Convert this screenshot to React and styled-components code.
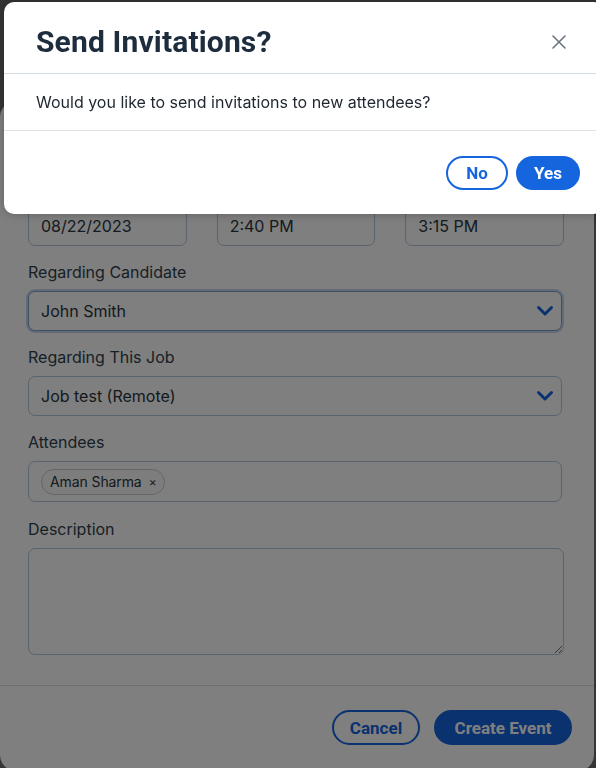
import styled, { createGlobalStyle } from "styled-components";

const GlobalStyle = createGlobalStyle`
  html, body {
    margin: 0;
    padding: 0;
    height: 100%;
    overflow: hidden;
    background: #6a6a6a;
  }
  * {
    box-sizing: border-box;
  }
`;

const BLUE = "#1565df";
const BODY_FONT = `Inter, "Noto Sans", sans-serif`;
const HEAD_FONT = `Roboto, "Liberation Sans", sans-serif`;

const Page = styled.div`
  width: 100vw;
  height: 100vh;
  font-family: ${BODY_FONT};
`;

/* ---------- create event modal (under the backdrop) ---------- */

const EventModal = styled.div`
  position: fixed;
  top: 101px;
  left: 0;
  width: 594px;
  background: #ffffff;
  border-radius: 16px;
`;

const EventBody = styled.div`
  padding: 105px 30px 30px 28px;
  display: flex;
  flex-direction: column;
  gap: 15px;
`;

const Row = styled.div`
  display: grid;
  grid-template-columns: repeat(3, 1fr);
  gap: 30px;
`;

const Field = styled.div`
  display: flex;
  flex-direction: column;
  gap: 8px;
  margin-top: ${({ $push }) => $push || 0}px;
`;

const Label = styled.label`
  font-size: 16px;
  line-height: 22px;
  color: #2f3e4e;
`;

const Input = styled.div`
  height: 40px;
  padding: 0 ${({ $inset }) => ($inset ? "7px" : "12px")} 0 12px;
  display: flex;
  align-items: center;
  justify-content: space-between;
  border: 1px solid ${({ $focused }) => ($focused ? "#7f9fc8" : "#b4c6dc")};
  box-shadow: ${({ $focused }) => ($focused ? "0 0 0 2px #c4d6ee" : "none")};
  border-radius: 7px;
  font-size: 16px;
  color: #2a3440;
  margin-right: ${({ $inset }) => ($inset ? "2px" : "0")};
  background: #fff;
`;

const TagBox = styled.div`
  height: 41px;
  margin-right: 2px;
  padding: 0 12px;
  display: flex;
  align-items: center;
  gap: 6px;
  border: 1px solid #b4c6dc;
  border-radius: 7px;
`;

const Chip = styled.span`
  height: 26px;
  padding: 0 8px 0 8px;
  display: inline-flex;
  align-items: center;
  gap: 7px;
  border: 1px solid #c7ccd2;
  border-radius: 13px;
  font-size: 14px;
  letter-spacing: -0.1px;
  color: #2a3440;
  background: #fafafa;
`;

const ChipClose = styled.span`
  font-size: 12px;
  color: #444;
`;

const TextArea = styled.textarea`
  height: 107px;
  border: 1px solid #b4c6dc;
  border-radius: 7px;
  resize: vertical;
  font-family: ${BODY_FONT};
  font-size: 16px;
  outline: none;
`;

const EventFooter = styled.div`
  border-top: 1px solid #d9e1ea;
  padding: 24px 22px 26px;
  display: flex;
  justify-content: flex-end;
  gap: 14px;
`;

const PillButton = styled.button`
  height: ${({ $h }) => $h || 35}px;
  min-width: ${({ $w }) => $w || 0}px;
  padding: 0 14px;
  border-radius: 999px;
  border: 2px solid ${BLUE};
  background: ${({ $primary }) => ($primary ? BLUE : "#ffffff")};
  color: ${({ $primary }) => ($primary ? "#ffffff" : BLUE)};
  font-family: ${HEAD_FONT};
  font-weight: 700;
  font-size: 17px;
  cursor: pointer;
`;

const Chevron = () => (
  <svg width="18" height="12" viewBox="0 0 18 12" fill="none" stroke={BLUE} strokeWidth="3" strokeLinecap="round" strokeLinejoin="round">
    <path d="M2.5 2.5l6.5 6.5 6.5-6.5" />
  </svg>
);

/* ---------- backdrop + confirm dialog ---------- */

const Backdrop = styled.div`
  position: fixed;
  inset: 0;
  background: rgba(0, 0, 0, 0.5);
`;

const Dialog = styled.div`
  position: fixed;
  top: 2px;
  left: 4px;
  width: 600px;
  background: #ffffff;
  border-radius: 10px;
  box-shadow: 0 0 10px rgba(0, 0, 0, 0.25);
`;

const DialogHeader = styled.div`
  height: 72px;
  padding: 8px 30px 0 32px;
  display: flex;
  align-items: center;
  justify-content: space-between;
  border-bottom: 1px solid #d3dbe3;
`;

const DialogTitle = styled.h2`
  margin: 0;
  font-family: ${HEAD_FONT};
  font-weight: 700;
  font-size: 30px;
  letter-spacing: 0.15px;
  color: #1d2d3e;
`;

const CloseButton = styled.button`
  width: 30px;
  height: 30px;
  padding: 0;
  display: flex;
  align-items: center;
  justify-content: center;
  border: none;
  background: none;
  cursor: pointer;
`;

const DialogBody = styled.div`
  height: 57px;
  padding: 0 32px;
  display: flex;
  align-items: center;
  border-bottom: 1px solid #dde3e9;
  font-size: 16px;
  color: #1f2630;
`;

const DialogFooter = styled.div`
  height: 83px;
  padding: 0 24px 0 32px;
  display: flex;
  align-items: center;
  justify-content: flex-end;
  gap: 8px;
`;

export default function App() {
  return (
    <Page>
      <GlobalStyle />

      <EventModal>
        <EventBody>
          <Row>
            <Input>08/22/2023</Input>
            <Input>2:40 PM</Input>
            <Input>3:15 PM</Input>
          </Row>
          <Field>
            <Label>Regarding Candidate</Label>
            <Input $focused $inset>
              John Smith
              <Chevron />
            </Input>
          </Field>
          <Field>
            <Label>Regarding This Job</Label>
            <Input $inset>
              Job test (Remote)
              <Chevron />
            </Input>
          </Field>
          <Field>
            <Label>Attendees</Label>
            <TagBox>
              <Chip>
                Aman Sharma <ChipClose>×</ChipClose>
              </Chip>
            </TagBox>
          </Field>
          <Field $push={1}>
            <Label>Description</Label>
            <TextArea />
          </Field>
        </EventBody>
        <EventFooter>
          <PillButton $w={88} $h={35}>Cancel</PillButton>
          <PillButton $primary $w={138} $h={35}>Create Event</PillButton>
        </EventFooter>
      </EventModal>

      <Backdrop />

      <Dialog>
        <DialogHeader>
          <DialogTitle>Send Invitations?</DialogTitle>
          <CloseButton aria-label="Close">
            <svg width="16" height="16" viewBox="0 0 16 16" stroke="#6b7480" strokeWidth="1.6" strokeLinecap="round">
              <path d="M2 2l12 12M14 2L2 14" />
            </svg>
          </CloseButton>
        </DialogHeader>
        <DialogBody>Would you like to send invitations to new attendees?</DialogBody>
        <DialogFooter>
          <PillButton $w={62} $h={34}>No</PillButton>
          <PillButton $primary $w={64} $h={34}>Yes</PillButton>
        </DialogFooter>
      </Dialog>
    </Page>
  );
}
